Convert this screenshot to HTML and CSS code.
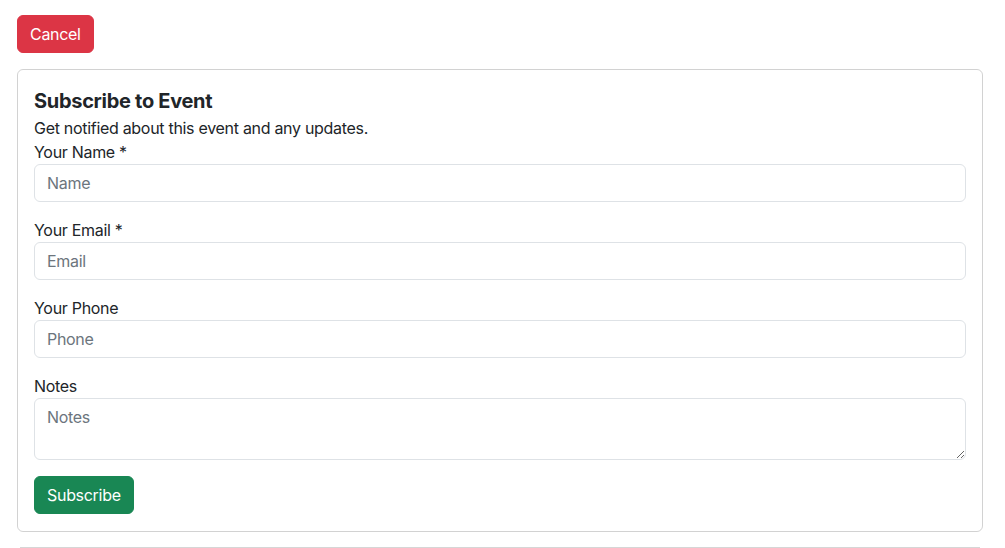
FILE: index.html
```html
<!DOCTYPE html>
<html lang="en">
<head>
  <meta charset="UTF-8">
  <title>Subscribe to Event</title>
  <meta name="viewport" content="width=device-width, initial-scale=1.0">
  <link rel="stylesheet" href="styles.css">
</head>
<body>
  <div class="page">
    <div class="actions">
      <button class="btn btn-danger">Cancel</button>
    </div>
    <div class="card">
      <div class="card-body">
        <h5 class="card-title">Subscribe to Event</h5>
        <p class="card-text">Get notified about this event and any updates.</p>
        <form>
          <div class="field">
            <label for="name">Your Name *</label>
            <input id="name" type="text" placeholder="Name">
          </div>
          <div class="field">
            <label for="email">Your Email *</label>
            <input id="email" type="email" placeholder="Email">
          </div>
          <div class="field">
            <label for="phone">Your Phone</label>
            <input id="phone" type="tel" placeholder="Phone">
          </div>
          <div class="field">
            <label for="notes">Notes</label>
            <textarea id="notes" rows="2" placeholder="Notes"></textarea>
          </div>
          <button type="button" class="btn btn-success">Subscribe</button>
        </form>
      </div>
    </div>
    <hr>
  </div>
</body>
</html>
```

FILE: styles.css
```css
* { box-sizing: border-box; margin: 0; padding: 0; }
body {
  font-family: Inter, 'Liberation Sans', Arial, sans-serif;
  font-size: 16px;
  line-height: 24px;
  letter-spacing: -0.3px;
  color: #212529;
  background: #fff;
}
.page {
  padding: 15px 22px 0 17px;
}
.actions {
  margin-bottom: 16px;
}
.btn {
  display: inline-block;
  font-family: inherit;
  font-size: 16px;
  line-height: 24px;
  letter-spacing: -0.3px;
  padding: 6px 12px;
  border: 1px solid transparent;
  border-radius: 6px;
  color: #fff;
  cursor: pointer;
}
.btn-danger { background: #dc3545; border-color: #dc3545; }
.btn-success { background: #198754; border-color: #198754; }
.card {
  border: 1px solid rgba(0, 0, 0, 0.175);
  border-radius: 6px;
}
.card-body {
  padding: 16px 16px 17px;
}
.card-title {
  font-size: 20px;
  font-weight: 650;
  line-height: 24px;
  margin: 3px 0 3px;
}
.card-text {
  margin-bottom: 0;
}
.field {
  margin-bottom: 16px;
}
.field label {
  display: block;
}
.field input,
.field textarea {
  display: block;
  width: 100%;
  font-family: inherit;
  font-size: 16px;
  line-height: 24px;
  letter-spacing: -0.3px;
  padding: 6px 12px;
  color: #212529;
  border: 1px solid #dee2e6;
  border-radius: 6px;
  background: #fff;
}
.field textarea {
  height: 62px;
  resize: vertical;
}
.field input::placeholder,
.field textarea::placeholder {
  color: #6c757d;
}
hr {
  border: 0;
  border-top: 1px solid #d6d6d6;
  margin: 15px 3px 0;
}
```
